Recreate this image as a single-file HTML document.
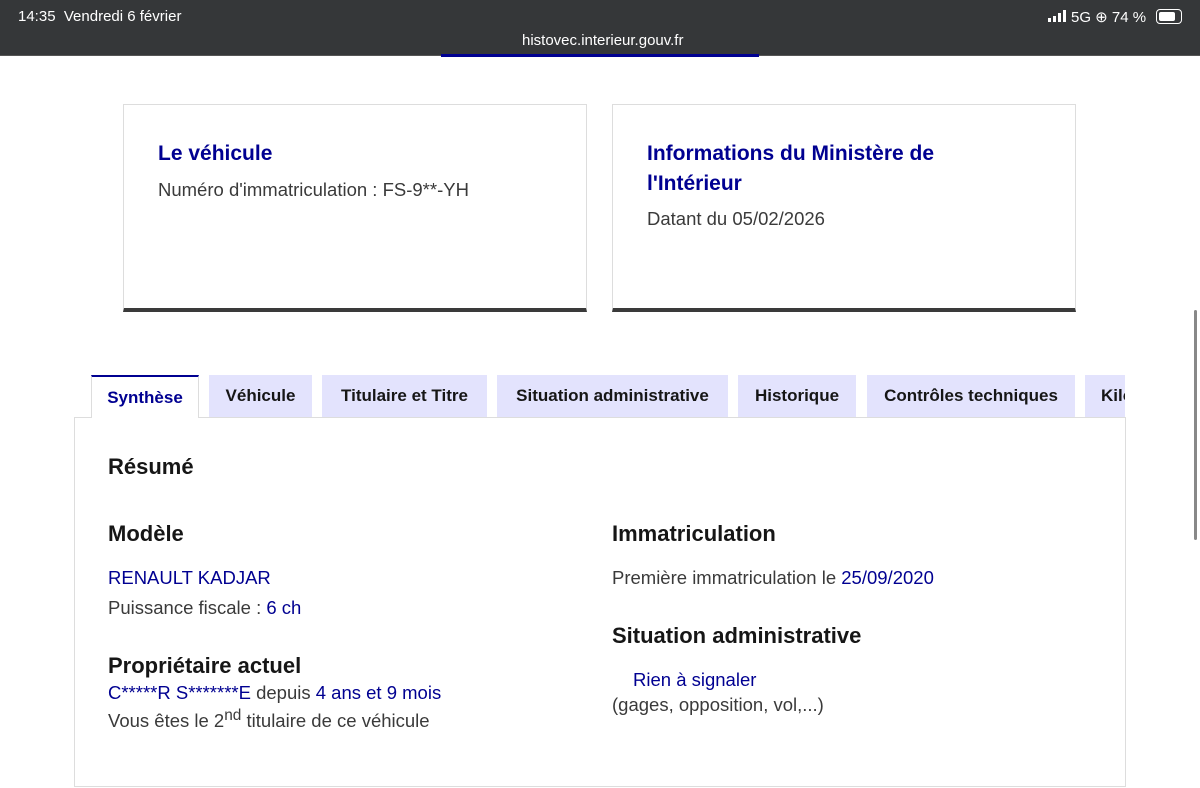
<!DOCTYPE html><html><head><meta charset="utf-8"><style>
*{margin:0;padding:0;box-sizing:border-box}
body{width:1200px;height:788px;overflow:hidden;background:#fff;font-family:"Liberation Sans",sans-serif;color:#161616;position:relative}
.bar{position:absolute;left:0;top:0;width:1200px;height:56px;background:#353739;color:#fff;border-bottom:1px solid #555}
.a{position:absolute}
.card{position:absolute;top:104px;height:208px;border:1px solid #ddd;border-bottom:4px solid #3a3a3a}
.t1{color:#000091;font-weight:bold;font-size:21px;line-height:30px}
.g{font-size:18.5px;color:#3a3a3a}
.tab{position:absolute;top:375px;height:42px;background:#e3e3fd;font-weight:bold;font-size:17px;line-height:42px;text-align:center;color:#161616}
.b{color:#000091}
h3{font-size:22px;font-weight:bold;position:absolute}
p{position:absolute;font-size:18.5px;color:#3a3a3a}
</style></head><body>
<div class="bar">
<div class="a" style="left:18px;top:8px;font-size:15px">14:35&nbsp;&nbsp;Vendredi 6 février</div>
<div class="a" style="left:522px;top:32px;font-size:15px">histovec.interieur.gouv.fr</div>
<div class="a" style="left:1048px;top:10px;width:20px;height:12px">
<div class="a" style="left:0;bottom:0;width:3px;height:4px;background:#fff"></div>
<div class="a" style="left:5px;bottom:0;width:3px;height:6px;background:#fff"></div>
<div class="a" style="left:10px;bottom:0;width:3px;height:9px;background:#fff"></div>
<div class="a" style="left:15px;bottom:0;width:3px;height:12px;background:#fff"></div>
</div>
<div class="a" style="left:1071px;top:8px;font-size:15px">5G ⊕ 74 %</div>
<div class="a" style="left:1156px;top:9px;width:26px;height:15px;border:1.5px solid #fff;border-radius:4px;padding:2px"><div style="width:16px;height:100%;background:#fff;border-radius:2px"></div></div>
</div>
<div class="a" style="left:441px;top:54px;width:318px;height:3px;background:#000091"></div>
<div class="card" style="left:123px;width:464px"><div class="a t1" style="left:34px;top:34px">Le véhicule</div><div class="a g" style="left:34px;top:74px">Numéro d'immatriculation : FS-9**-YH</div></div>
<div class="card" style="left:612px;width:464px"><div class="a t1" style="left:34px;top:34px;width:320px">Informations du Ministère de l'Intérieur</div><div class="a g" style="left:34px;top:103px">Datant du 05/02/2026</div></div>
<div class="a" style="left:74px;top:417px;width:1052px;height:370px;border:1px solid #ddd"></div>
<div class="tab" style="left:91px;width:108px;background:#fff;border-top:2px solid #000091;border-left:1px solid #ddd;border-right:1px solid #ddd;height:43px;color:#000091">Synthèse</div>
<div class="tab" style="left:209px;width:103px">Véhicule</div>
<div class="tab" style="left:322px;width:165px">Titulaire et Titre</div>
<div class="tab" style="left:497px;width:231px">Situation administrative</div>
<div class="tab" style="left:738px;width:118px">Historique</div>
<div class="tab" style="left:867px;width:208px">Contrôles techniques</div>
<div class="tab" style="left:1085px;width:40px;text-align:left;padding-left:16px;overflow:hidden">Kilo</div>
<h3 style="left:108px;top:454px">Résumé</h3>
<h3 style="left:108px;top:521px">Modèle</h3>
<p style="left:108px;top:567px;color:#000091">RENAULT KADJAR</p>
<p style="left:108px;top:597px">Puissance fiscale : <span class="b">6 ch</span></p>
<h3 style="left:108px;top:653px">Propriétaire actuel</h3>
<p style="left:108px;top:682px"><span class="b">C*****R S*******E</span> depuis <span class="b">4 ans et 9 mois</span></p>
<p style="left:108px;top:707px">Vous êtes le 2<sup>nd</sup> titulaire de ce véhicule</p>
<h3 style="left:612px;top:521px">Immatriculation</h3>
<p style="left:612px;top:567px">Première immatriculation le <span class="b">25/09/2020</span></p>
<h3 style="left:612px;top:623px">Situation administrative</h3>
<p style="left:633px;top:669px;color:#000091">Rien à signaler</p>
<p style="left:612px;top:694px">(gages, opposition, vol,...)</p>
<div class="a" style="left:1194px;top:310px;width:3px;height:230px;background:#888;border-radius:2px"></div>
</body></html>
